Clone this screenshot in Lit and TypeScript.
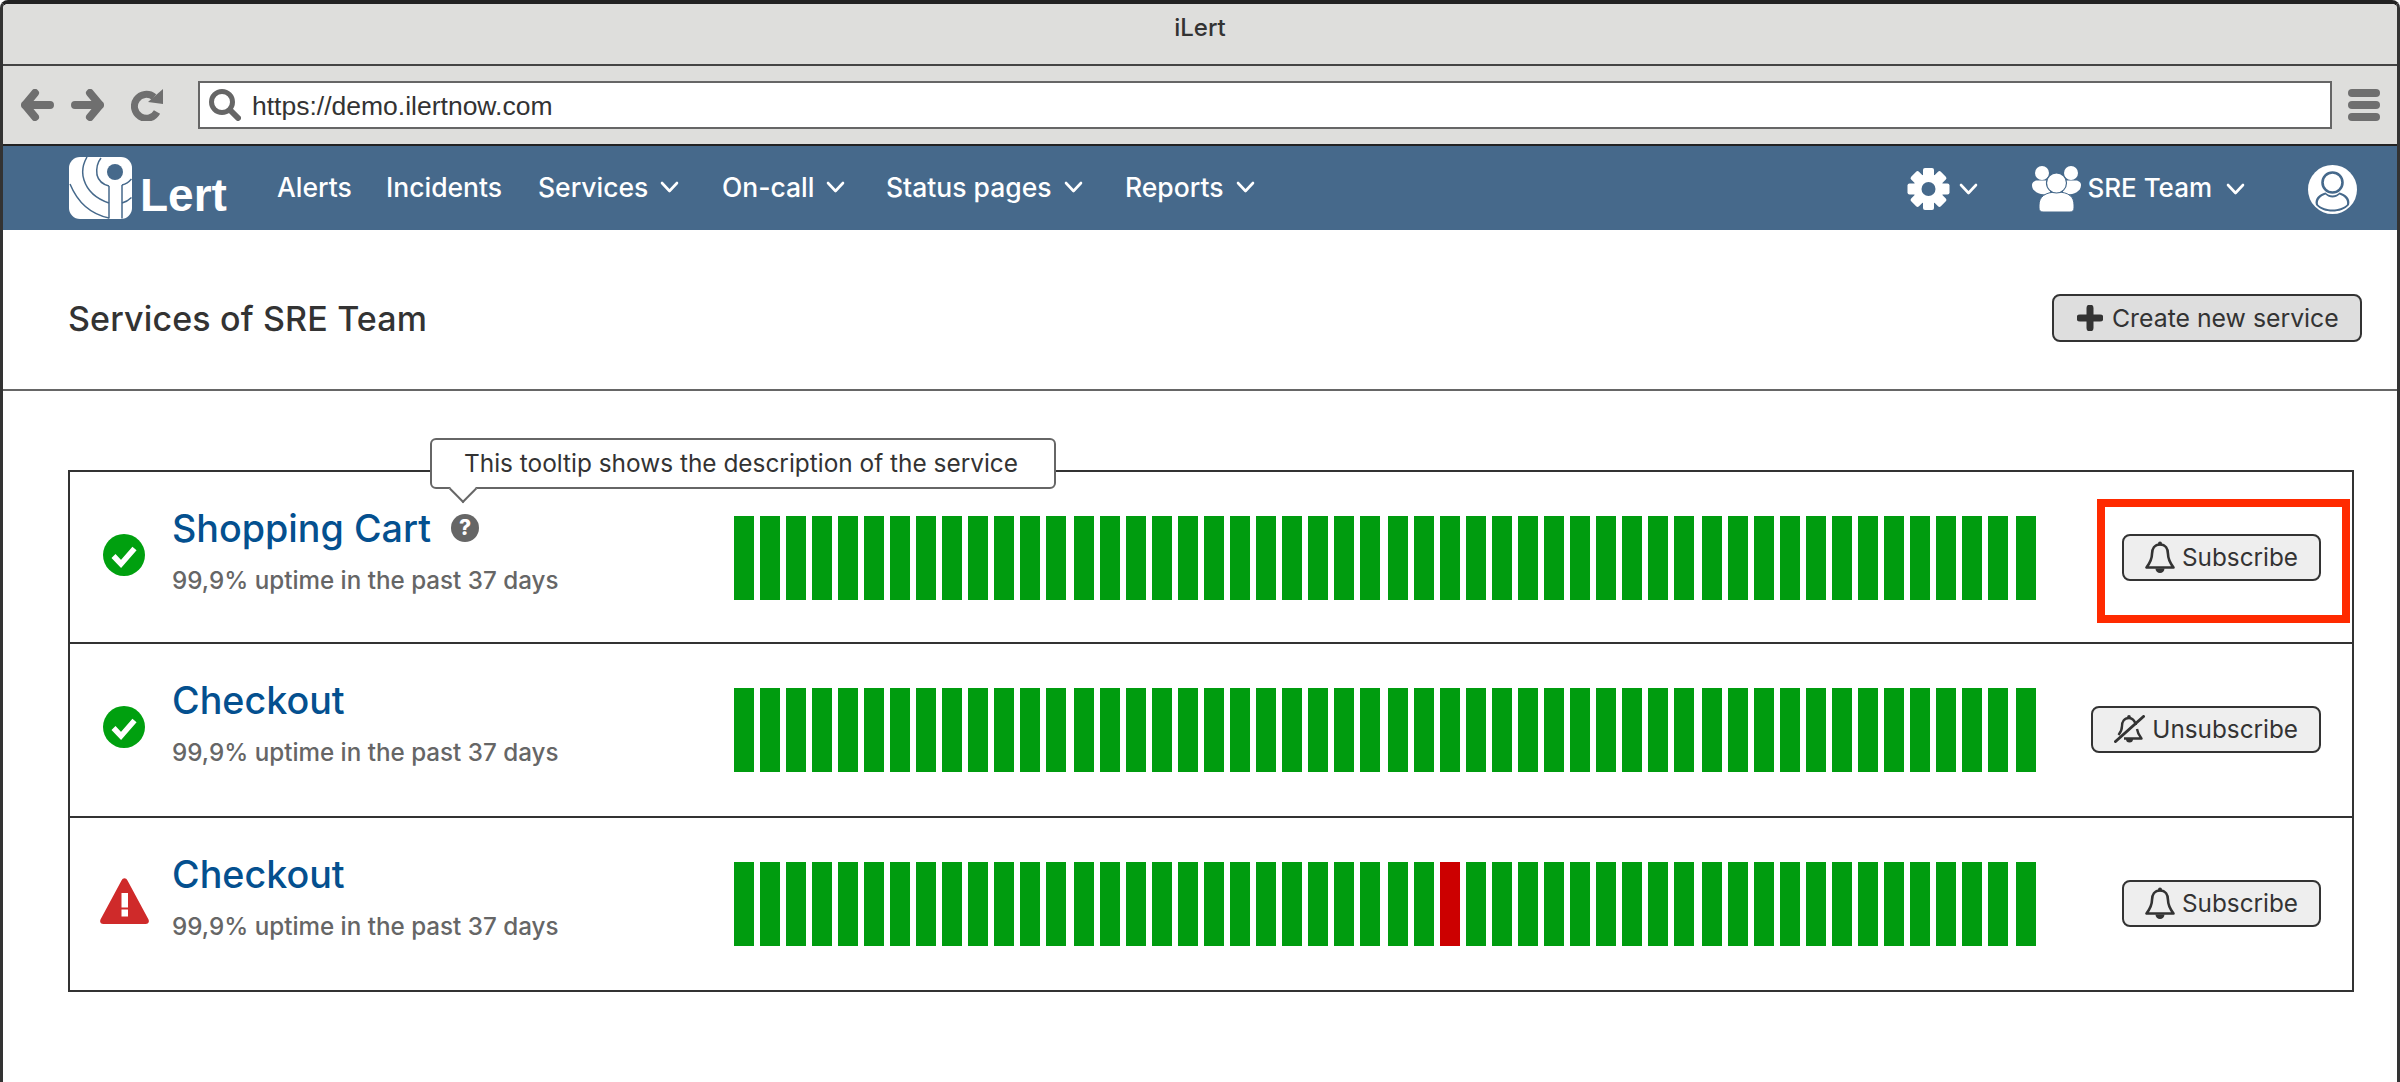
import { LitElement, html, css, svg, unsafeCSS } from 'lit'
import { customElement } from 'lit/decorators.js'

const NAV = '#46698b'

const chevron = html`<svg class="chev" width="19" height="12" viewBox="0 0 19 12"><path d="M2 2l7.5 8L17 2" fill="none" stroke="#fff" stroke-width="2.6" stroke-linecap="round" stroke-linejoin="round"/></svg>`

const bell = html`<svg class="bell" width="30" height="32" viewBox="0 0 30 32">
  <circle cx="15" cy="2.5" r="2" fill="#333"/>
  <path d="M15 3.5C9.5 3.5 7 8 7 13c0 6-2.5 9.5-5.5 13.5h27C25.5 22.5 23 19 23 13c0-5-2.5-9.5-8-9.5z" fill="none" stroke="#333" stroke-width="2.6" stroke-linejoin="round"/>
  <path d="M10.5 27.5h9a4.5 4.5 0 0 1-9 0z" fill="#333"/>
</svg>`

const bellOff = html`<svg class="bell" width="31" height="28" viewBox="0 0 31 28">
  <circle cx="15" cy="1.8" r="1.8" fill="#333"/>
  <path d="M22 10C20.5 5 18 3 15 3c-5 0-7 4-7 8 0 4-1.5 6.5-3.5 9M10 23.5h17.5C25 20.5 23.5 17.5 23 14" fill="none" stroke="#333" stroke-width="2.4" stroke-linejoin="round"/>
  <path d="M1.5 26.5L29.5 1.5" stroke="#333" stroke-width="3" stroke-linecap="round"/>
  <path d="M12 24h7a3.5 3.5 0 0 1-7 0z" fill="#333"/>
</svg>`

const okIcon = html`<svg width="42" height="42" viewBox="0 0 42 42">
  <circle cx="21" cy="21" r="21" fill="#00a00f"/>
  <path d="M10.5 22l7.5 8 13.5-15.5" fill="none" stroke="#fff" stroke-width="5.5"/>
</svg>`

const warnIcon = html`<svg width="49" height="46" viewBox="0 0 49 46">
  <path d="M21.5 2.5c1.5-3 4.5-3 6 0l21 39c1 2.5 0 4.5-3 4.5H3.5c-3 0-4-2-3-4.5z" fill="#cf2a2a"/>
  <rect x="21.5" y="15" width="6.5" height="14.5" fill="#fff"/>
  <rect x="21.5" y="31.5" width="6.5" height="7" fill="#fff"/>
</svg>`

const logoMark = html`<svg width="63" height="62" viewBox="0 0 63 62">
  <rect width="63" height="62" rx="11" fill="#fff"/>
  <circle cx="46" cy="15" r="8" fill="${NAV}"/>
  <g fill="none" stroke="${NAV}" stroke-width="1.5">
    <path d="M32 1C28 6 27 11 28 18c1.5 6 6 9.5 12 11"/>
    <path d="M18 0c-4 7-6 14-3 23 3.5 11 13 19 25 23"/>
    <path d="M1 27c7 17 20 30 39 34"/>
    <path d="M53 28c4-1 7-3 9.5-6"/>
    <path d="M53 46c4-1 7-3 9.5-5.5"/>
    <path d="M40 29V61.5M53 28V61.5"/>
  </g>
</svg>`

const gearIcon = html`<svg width="43" height="42" viewBox="-21.5 -21 43 42">
  ${[0, 45, 90, 135, 180, 225, 270, 315].map(a => svg`<rect x="-5.5" y="-21" width="11" height="10" rx="2" fill="#fff" transform="rotate(${a})"/>`)}
  <circle r="15" fill="#fff"/>
  <circle r="7" fill="${NAV}"/>
</svg>`

const teamIcon = html`<svg width="49" height="46" viewBox="0 0 49 46">
  <circle cx="10" cy="7" r="7" fill="#fff"/>
  <circle cx="39" cy="7" r="7" fill="#fff"/>
  <path d="M0 19c0-3 3-4.5 5-4.5h10c2 0 3 2 3 4v7c0 2-2 3-4 3-7 0-14-3-14-9.5z" fill="#fff"/>
  <path d="M49 19c0-3-3-4.5-5-4.5H34c-2 0-3 2-3 4v7c0 2 2 3 4 3 7 0 14-3 14-9.5z" fill="#fff"/>
  <path d="M7 39c0-8 6-13 18-13s17 5 17 13v3c0 2.5-1.5 4-4 4H11c-2.5 0-4-1.5-4-4z" fill="#fff" stroke="${NAV}" stroke-width="1"/>
  <circle cx="24.5" cy="17" r="10" fill="#fff" stroke="${NAV}" stroke-width="1.2"/>
</svg>`

const userIcon = html`<svg width="49" height="49" viewBox="0 0 49 49">
  <circle cx="24.5" cy="24.5" r="24.5" fill="#fff"/>
  <path d="M8 40c-2-6 3-11 9.5-12.5 3.5 4 10.5 4 14 0C38 29 43 34 41 40c-4 4.5-10 6.5-16.5 6.5S12 44.5 8 40z" fill="${NAV}"/>
  <path d="M10 39.5c-1-5 3-8.5 7.5-10 4 4 10 4 14 0 4.5 1.5 8.5 5 7.5 10-3.5 3.5-9 5-14.5 5s-11-1.5-14.5-5z" fill="#fff"/>
  <circle cx="24.5" cy="17.5" r="10" fill="#fff" stroke="${NAV}" stroke-width="2.6"/>
</svg>`

interface Service {
  name: string
  status: 'ok' | 'warn'
  action: 'Subscribe' | 'Unsubscribe'
  redBar?: number
  help?: boolean
}

const SERVICES: Service[] = [
  { name: 'Shopping Cart', status: 'ok', action: 'Subscribe', help: true },
  { name: 'Checkout', status: 'ok', action: 'Unsubscribe' },
  { name: 'Checkout', status: 'warn', action: 'Subscribe', redBar: 27 },
]

const BAR_COUNT = 50

@customElement('app-root')
export class AppRoot extends LitElement {
  static styles = css`
    :host {
      display: block;
      width: 2400px;
      height: 1082px;
      background: #fff;
      font-family: Inter, 'Liberation Sans', sans-serif;
      color: #333;
    }
    .window {
      box-sizing: border-box;
      height: 1082px;
      border: 3px solid #333;
      border-top: 4px solid #222;
      border-bottom: none;
      border-radius: 8px 8px 0 0;
      overflow: hidden;
    }
    .titlebar {
      height: 60px;
      box-sizing: border-box;
      padding-bottom: 14px;
      background: #dededc;
      display: flex;
      align-items: center;
      justify-content: center;
      font-size: 24px;
      font-weight: 500;
    }
    .toolbar {
      height: 82px;
      box-sizing: border-box;
      background: #dededc;
      border-top: 2px solid #444;
      border-bottom: 2px solid #222;
      display: flex;
      align-items: center;
      padding: 0 17px 0 18px;
      color: #6f6f6f;
    }
    .toolbar svg { flex: none; }
    .fwd { margin-left: 17px; }
    .reload { margin-left: 27px; }
    .address {
      flex: 1;
      margin-left: 35px;
      height: 48px;
      box-sizing: border-box;
      border: 2px solid #666;
      background: #fff;
      display: flex;
      align-items: center;
      padding-left: 9px;
      gap: 11px;
      font-family: 'Liberation Sans', Arial, sans-serif;
      font-size: 26.5px;
      color: #333;
    }
    .address span { padding-top: 3px; }
    .burger {
      margin-left: 16px;
      width: 32px;
      display: grid;
      gap: 4px;
    }
    .burger span {
      height: 8px;
      border-radius: 4px;
      background: #6f6f6f;
    }
    nav {
      height: 84px;
      background: ${unsafeCSS(NAV)};
      display: flex;
      align-items: center;
      padding: 0 40px 0 66px;
      color: #fff;
      font-size: 26.5px;
      font-weight: 500;
    }
    .logo {
      display: flex;
      align-items: flex-end;
      width: 208px;
      flex: none;
      height: 62px;
    }
    .logo-word {
      margin-left: 8px;
      font-family: 'Liberation Sans', Arial, sans-serif;
      font-weight: 700;
      font-size: 46px;
      line-height: 48px;
      height: 48px;
    }
    .menu {
      display: grid;
      grid-template-columns: 109px 152px 184px 164px 239px auto;
      align-items: center;
      margin-bottom: 2px;
    }
    .item {
      display: flex;
      align-items: center;
      gap: 12px;
      white-space: nowrap;
    }
    .nav-right {
      margin-left: auto;
      display: flex;
      align-items: center;
      padding-top: 2px;
    }
    .nav-right span { display: flex; }
    .gear-chev { margin-left: 9px; }
    .team { margin-left: 54px; }
    .nav-right .team-name { margin: 0 0 4px 6px; font-size: 26px; }
    .team-chev { margin-left: 14px; }
    .user { margin-left: 63px; }
    .head {
      box-sizing: border-box;
      height: 161px;
      padding: 17px 35px 0 65px;
      border-bottom: 2px solid #666;
      display: flex;
      align-items: center;
      justify-content: space-between;
    }
    h1 {
      margin: 0;
      font-size: 34px;
      letter-spacing: 0.15px;
      font-weight: 500;
      color: #333;
    }
    .btn {
      box-sizing: border-box;
      height: 47px;
      border: 2px solid #333;
      border-radius: 8px;
      background: #eee;
      display: flex;
      align-items: center;
      font-size: 24.3px;
      font-weight: 400;
      color: #333;
      white-space: nowrap;
      font-family: inherit;
    }
    .create {
      width: 310px;
      height: 48px;
      background: #dedede;
      padding-left: 23px;
      gap: 9px;
      font-size: 24.8px;
    }
    .plus {
      width: 26px;
      height: 26px;
      flex: none;
    }
    .list {
      margin: 79px 0 0 65px;
      width: 2286px;
      box-sizing: border-box;
      border: 2px solid #333;
    }
    .row {
      position: relative;
      display: flex;
      align-items: flex-start;
      box-sizing: content-box;
      height: 128px;
      padding: 44px 31px 0 30px;
      border-top: 2px solid #333;
    }
    .row:first-child {
      border-top: none;
      height: 126px;
    }
    .status {
      width: 72px;
      height: 77px;
      flex: none;
      display: flex;
      align-items: center;
    }
    .status.ok { padding-left: 3px; width: 69px; }
    .info {
      position: relative;
      width: 562px;
      flex: none;
      margin-top: -8px;
    }
    .name-line {
      display: flex;
      align-items: center;
      height: 40px;
    }
    .name {
      font-size: 37.7px;
      line-height: 40px;
      font-weight: 500;
      color: #04508f;
      white-space: nowrap;
    }
    .help {
      margin-left: 20px;
      width: 28px;
      height: 28px;
      border-radius: 50%;
      background: #666;
      color: #fff;
      font-size: 21px;
      font-weight: 800;
      line-height: 28px;
      text-align: center;
    }
    .sub {
      margin-top: 18px;
      font-size: 24.2px;
      line-height: 30px;
      font-weight: 500;
      color: #666;
      white-space: nowrap;
    }
    .tip {
      position: absolute;
      left: 258px;
      top: -70px;
      box-sizing: border-box;
      width: 626px;
      height: 51px;
      border: 2px solid #666;
      border-radius: 6px;
      background: #fff;
      padding-left: 32px;
      font-size: 24.4px;
      line-height: 47px;
      color: #333;
      white-space: nowrap;
      z-index: 2;
    }
    .tip::after {
      content: '';
      position: absolute;
      left: 21px;
      bottom: -12px;
      width: 20px;
      height: 20px;
      box-sizing: border-box;
      background: #fff;
      border-right: 2px solid #666;
      border-bottom: 2px solid #666;
      transform: rotate(45deg);
    }
    .bars {
      display: flex;
      gap: 6px;
      flex: none;
    }
    .bar {
      width: 20px;
      height: 84px;
      background: #009c0f;
    }
    .bar.wide { margin-left: 2px; }
    .bar.down { background: #cc0000; }
    .action {
      flex: 1;
      height: 83px;
      display: flex;
      align-items: center;
      justify-content: flex-end;
    }
    .action .btn {
      padding: 0 21px 2px;
      gap: 7px;
    }
    .mark {
      position: absolute;
      left: 2027px;
      top: 27px;
      width: 253px;
      height: 124px;
      box-sizing: border-box;
      border: 8px solid #ff2a00;
      pointer-events: none;
    }
  `

  private renderBars(redBar?: number) {
    const bars = []
    for (let i = 0; i < BAR_COUNT; i++) {
      const wide = i > 1 && i % 12 === 1
      bars.push(html`<div class="bar ${wide ? 'wide' : ''} ${i === redBar ? 'down' : ''}"></div>`)
    }
    return html`<div class="bars">${bars}</div>`
  }

  private renderRow(s: Service, index: number) {
    return html`
      <div class="row">
        <div class="status ${s.status}">${s.status === 'ok' ? okIcon : warnIcon}</div>
        <div class="info">
          ${s.help ? html`<div class="tip">This tooltip shows the description of the service</div>` : ''}
          <div class="name-line">
            <span class="name">${s.name}</span>
            ${s.help ? html`<span class="help">?</span>` : ''}
          </div>
          <div class="sub">99,9% uptime in the past 37 days</div>
        </div>
        ${this.renderBars(s.redBar)}
        <div class="action">
          <button class="btn">${s.action === 'Subscribe' ? bell : bellOff}${s.action}</button>
        </div>
        ${index === 0 ? html`<div class="mark"></div>` : ''}
      </div>
    `
  }

  render() {
    return html`
      <div class="window">
        <div class="titlebar">iLert</div>
        <div class="toolbar">
          <svg width="33" height="32" viewBox="0 0 33 32"><path d="M14 4L4 16l10 12M4 16h25" fill="none" stroke="currentColor" stroke-width="8" stroke-linecap="round" stroke-linejoin="round"/></svg>
          <svg class="fwd" width="33" height="32" viewBox="0 0 33 32"><path d="M19 4l10 12-10 12M29 16H4" fill="none" stroke="currentColor" stroke-width="8" stroke-linecap="round" stroke-linejoin="round"/></svg>
          <svg class="reload" width="32" height="32" viewBox="0 0 32 32"><path d="M26 23a12 12 0 1 1-3-15" fill="none" stroke="currentColor" stroke-width="7"/><path d="M17 13L32 15V0z" fill="currentColor"/></svg>
          <div class="address">
            <svg width="32" height="32" viewBox="0 0 32 32"><circle cx="13" cy="13" r="10.5" fill="none" stroke="#666" stroke-width="5"/><path d="M21 21l8 8" stroke="#666" stroke-width="6" stroke-linecap="round"/></svg>
            <span>https://demo.ilertnow.com</span>
          </div>
          <div class="burger"><span></span><span></span><span></span></div>
        </div>
        <nav>
          <div class="logo">${logoMark}<span class="logo-word">Lert</span></div>
          <div class="menu">
            <div class="item">Alerts</div>
            <div class="item">Incidents</div>
            <div class="item">Services ${chevron}</div>
            <div class="item">On-call ${chevron}</div>
            <div class="item">Status pages ${chevron}</div>
            <div class="item">Reports ${chevron}</div>
          </div>
          <div class="nav-right">
            ${gearIcon}
            <span class="gear-chev">${chevron}</span>
            <span class="team">${teamIcon}</span>
            <span class="team-name">SRE Team</span>
            <span class="team-chev">${chevron}</span>
            <span class="user">${userIcon}</span>
          </div>
        </nav>
        <div class="head">
          <h1>Services of SRE Team</h1>
          <button class="btn create">
            <svg class="plus" viewBox="0 0 26 26"><path d="M13 3v20M3 13h20" stroke="#333" stroke-width="7" stroke-linecap="round"/></svg>
            Create new service
          </button>
        </div>
        <div class="list">
          ${SERVICES.map((s, i) => this.renderRow(s, i))}
        </div>
      </div>
    `
  }
}

declare global {
  interface HTMLElementTagNameMap {
    'app-root': AppRoot
  }
}
